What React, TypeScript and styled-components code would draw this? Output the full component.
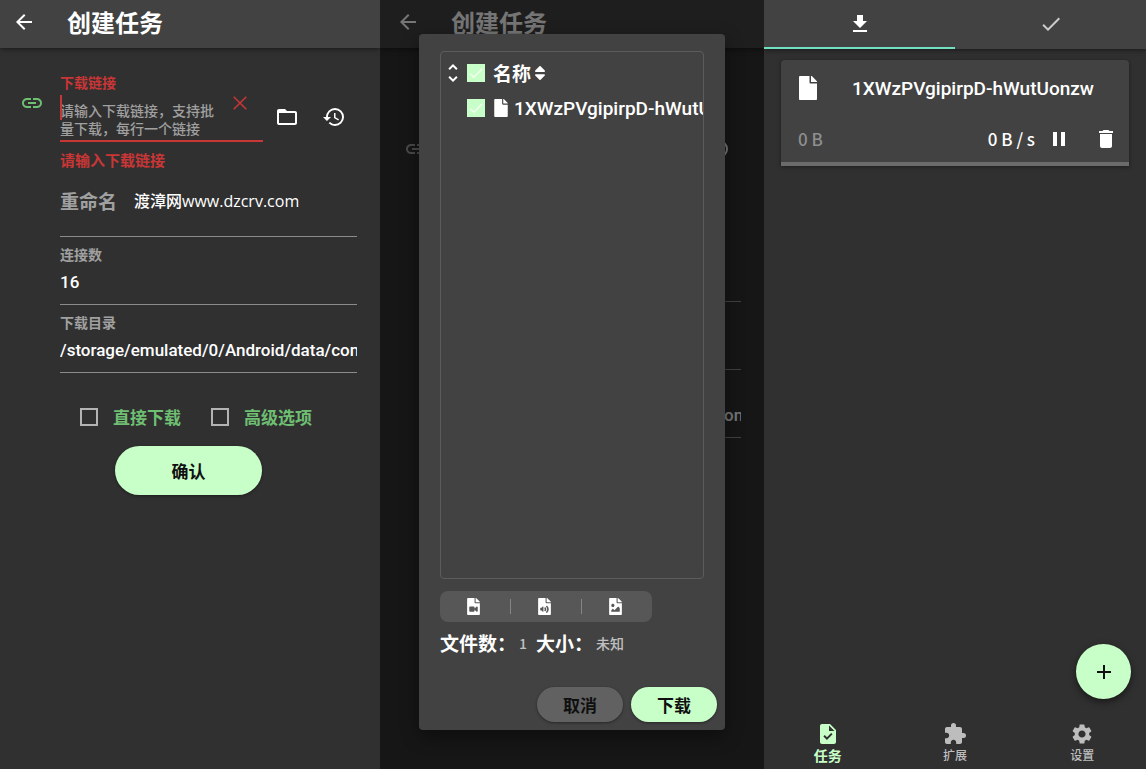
import React from "react";
import styled, { createGlobalStyle, css } from "styled-components";
import {
  MdAdd,
  MdArrowBack,
  MdCheck,
  MdDelete,
  MdExtension,
  MdFileDownload,
  MdHistory,
  MdLink,
  MdPause,
  MdSettings,
  MdTask,
  MdUnfoldMore,
} from "react-icons/md";
import { FaFile, FaFileAudio, FaFileImage, FaFileVideo, FaSort } from "react-icons/fa";

const color = {
  page: "#303030",
  surface: "#424242",
  raised: "#575757",
  line: "#8b8b8b",
  muted: "#a0a0a0",
  text: "#ffffff",
  mint: "#c8ffc8",
  green: "#6fbf73",
  red: "#c93636",
  teal: "#72dfc0",
};

const latin = `Roboto, "Noto Sans CJK SC", sans-serif`;

const GlobalStyle = createGlobalStyle`
  *, *::before, *::after { box-sizing: border-box; }
  body {
    margin: 0;
    background: ${color.page};
    color: ${color.text};
    font-family: "Noto Sans CJK SC", "Noto Sans", sans-serif;
    font-size: 17px;
    font-weight: 500;
  }
  button, input, textarea { font: inherit; color: inherit; }
  button { border: 0; padding: 0; background: none; cursor: pointer; }
  svg { display: block; flex: none; }
`;

const Screens = styled.main`
  display: grid;
  grid-template-columns: 380fr 384fr 382fr;
  min-height: 100vh;
`;

const Panel = styled.section`
  position: relative;
  display: flex;
  flex-direction: column;
  min-width: 0;
  overflow: hidden;
  background: ${color.page};
`;

const AppBar = styled.header<{ $inset?: boolean }>`
  display: flex;
  align-items: center;
  gap: 31px;
  height: 48px;
  padding: 0 ${(p) => (p.$inset ? 16 : 12)}px 5px;
  background: ${color.surface};
  box-shadow: 0 1px 5px rgba(0, 0, 0, 0.5);
`;

const Title = styled.h1`
  margin: 0;
  font-size: 24px;
  line-height: 32px;
  font-weight: 700;
`;

const IconButton = styled.button<{ $width?: number }>`
  display: flex;
  align-items: center;
  justify-content: center;
  width: ${(p) => p.$width ?? 24}px;
  height: 24px;
`;

const Body = styled.form<{ $inset?: boolean }>`
  display: flex;
  flex-direction: column;
  padding: ${(p) => (p.$inset ? "0 23px 0 24px" : "24px 23px 0 20px")};
`;

const LinkRow = styled.div<{ $tall?: boolean }>`
  display: flex;
  align-items: ${(p) => (p.$tall ? "center" : "flex-start")};
  min-height: ${(p) => (p.$tall ? 202 : 0)}px;
`;

const LinkMark = styled.span<{ $active?: boolean }>`
  width: 40px;
  padding-top: ${(p) => (p.$active ? 19 : 0)}px;
  color: ${(p) => (p.$active ? color.green : color.muted)};
`;

const LinkField = styled.div`
  flex: 1;
  min-width: 0;
  display: flex;
  flex-direction: column;
`;

const Label = styled.label<{ $error?: boolean }>`
  font-size: 14px;
  line-height: 20px;
  font-weight: 700;
  color: ${(p) => (p.$error ? color.red : color.muted)};
`;

const LinkBox = styled.div`
  position: relative;
  display: flex;
  align-items: flex-start;
  padding-top: 9px;
  border-bottom: 2px solid ${color.red};
`;

const Caret = styled.span`
  position: absolute;
  left: 0;
  top: 3px;
  width: 2px;
  height: 25px;
  background: ${color.red};
`;

const LinkInput = styled.textarea`
  flex: 1;
  min-width: 0;
  height: 39px;
  padding: 0;
  border: 0;
  outline: 0;
  resize: none;
  overflow: hidden;
  background: none;
  font-size: 14px;
  line-height: 18px;
  &::placeholder { color: ${color.muted}; opacity: 1; }
`;

const ClearButton = styled(IconButton)`
  width: 46px;
  height: 14px;
  margin-top: -5px;
  color: ${color.red};
`;

const Helper = styled.p`
  margin: 8px 0 0;
  font-size: 15px;
  line-height: 20px;
  font-weight: 700;
  color: ${color.red};
`;

const LinkTools = styled.div<{ $drop?: boolean }>`
  display: flex;
  padding-top: ${(p) => (p.$drop ? 33 : 0)}px;
`;

const Fields = styled.div`
  display: flex;
  flex-direction: column;
  padding-left: 40px;
`;

const RenameField = styled.div<{ $short?: boolean }>`
  display: flex;
  align-items: center;
  gap: 17px;
  height: ${(p) => (p.$short ? 52 : 67)}px;
  padding-bottom: 5px;
  border-bottom: 1px solid ${color.line};
`;

const RenameLabel = styled.label`
  flex: none;
  font-size: 19px;
  line-height: 26px;
  font-weight: 700;
  color: ${color.muted};
`;

const bareInput = css`
  width: 100%;
  min-width: 0;
  padding: 0;
  border: 0;
  outline: 0;
  background: none;
`;

const RenameInput = styled.input`
  ${bareInput}
  font-family: "Open Sans", "Noto Sans CJK SC", sans-serif;
  font-size: 16px;
  line-height: 24px;
  font-weight: 500;
`;

const Field = styled.div`
  display: flex;
  flex-direction: column;
  justify-content: flex-end;
  gap: 5px;
  height: 68px;
  padding: 7px 0 9px;
  border-bottom: 1px solid ${color.line};
`;

const FieldInput = styled.input`
  ${bareInput}
  height: 26px;
  font-family: ${latin};
  font-size: 17px;
`;

const Options = styled.div`
  display: flex;
  gap: 30px;
  margin: 32px 0 0 60px;
`;

const Option = styled.label`
  display: flex;
  align-items: center;
  gap: 15px;
  line-height: 24px;
  font-weight: 700;
  color: ${color.green};
`;

const Tick = styled.input`
  appearance: none;
  flex: none;
  width: 18px;
  height: 18px;
  margin: 0;
  border: 2px solid #b3b3b3;
  &:checked { border: 0; background: ${color.mint}; }
`;

const TickWrap = styled.span`
  position: relative;
  display: flex;
  svg {
    position: absolute;
    inset: 0;
    color: #f2fff0;
    pointer-events: none;
  }
`;

const PillButton = styled.button<{ $size: "large" | "small"; $quiet?: boolean }>`
  width: ${(p) => (p.$size === "large" ? 147 : 86)}px;
  height: ${(p) => (p.$size === "large" ? 49 : 35)}px;
  padding-bottom: 1px;
  border-radius: 25px;
  background: ${(p) => (p.$quiet ? "#616161" : color.mint)};
  color: #101010;
  font-size: 17px;
  font-weight: 700;
  box-shadow: 0 1px 3px rgba(0, 0, 0, 0.4);
`;

const ConfirmButton = styled(PillButton)`
  align-self: center;
  margin-top: 17px;
`;

const Scrim = styled.div`
  position: absolute;
  inset: 0;
  display: flex;
  padding: 34px 39px 39px;
  background: rgba(0, 0, 0, 0.54);
`;

const Dialog = styled.div`
  flex: 1;
  min-width: 0;
  display: flex;
  flex-direction: column;
  padding: 17px 8px 8px 21px;
  border-radius: 4px;
  background: ${color.surface};
  box-shadow: 0 6px 18px rgba(0, 0, 0, 0.4);
`;

const FileTree = styled.div`
  flex: 1;
  margin-right: 13px;
  padding-top: 8px;
  overflow: hidden;
  border: 1px solid #5c5c5c;
  border-radius: 4px;
`;

const TreeRow = styled.div<{ $child?: boolean }>`
  display: flex;
  align-items: center;
  gap: ${(p) => (p.$child ? 7 : 8)}px;
  height: ${(p) => (p.$child ? 44 : 26)}px;
  padding-left: ${(p) => (p.$child ? 26 : 0)}px;
  white-space: nowrap;
`;

const TreeHead = styled.button`
  display: flex;
  align-items: center;
  font-size: 19px;
  line-height: 26px;
  font-weight: 700;
`;

const FileName = styled.span`
  padding-top: 2px;
  font-family: ${latin};
  font-size: 19px;
  line-height: 26px;
`;

const FileLabel = styled.span`
  display: flex;
  align-items: center;
  gap: 4px;
`;

const Expander = styled(IconButton)`
  margin-right: -6px;
`;

const FilterBar = styled.div`
  display: flex;
  align-items: center;
  align-self: flex-start;
  height: 31px;
  margin-top: 12px;
  border-radius: 8px;
  background: ${color.raised};
`;

const FilterButton = styled.button`
  display: flex;
  align-items: center;
  justify-content: center;
  width: 70px;
  height: 31px;
  padding-right: 4px;
`;

const Separator = styled.span`
  width: 1px;
  height: 15px;
  background: #858585;
`;

const Summary = styled.p`
  display: flex;
  align-items: center;
  margin: 8px 0 0;
  font-size: 19px;
  line-height: 26px;
  font-weight: 700;
  white-space: nowrap;
`;

const SummaryValue = styled.span`
  min-width: 20px;
  padding: 0 3px;
  font-size: 14px;
  font-weight: 500;
  color: #c0c0c0;
`;

const DialogActions = styled.div`
  display: flex;
  justify-content: flex-end;
  gap: 8px;
  margin-top: 31px;
`;

const Tabs = styled.nav`
  display: flex;
  height: 49px;
  background: ${color.surface};
  box-shadow: 0 1px 5px rgba(0, 0, 0, 0.5);
`;

const Tab = styled.button<{ $active?: boolean }>`
  flex: 1;
  display: flex;
  align-items: center;
  justify-content: center;
  color: ${(p) => (p.$active ? color.text : "#cccccc")};
  border-bottom: 2px solid ${(p) => (p.$active ? color.teal : "transparent")};
`;

const Card = styled.article`
  margin: 11px 17px 0;
  border-radius: 4px 4px 0 0;
  background: ${color.surface};
  box-shadow: 0 1px 4px rgba(0, 0, 0, 0.4);
`;

const CardTop = styled.div`
  display: flex;
  align-items: center;
  gap: 32px;
  padding: 14px 15px 0;
  white-space: nowrap;
`;

const CardName = styled(FileName).attrs({ as: "h2" })`
  margin: 0;
  font-weight: 500;
`;

const CardBottom = styled.div`
  display: flex;
  align-items: center;
  padding: 24px 11px 10px 17px;
`;

const Size = styled.span`
  flex: 1;
  font-size: 17px;
  line-height: 26px;
  color: #8f8f8f;
`;

const Speed = styled.span`
  padding-right: 12px;
  font-size: 17px;
  line-height: 26px;
`;

const CardActions = styled.div`
  display: flex;
  gap: 23px;
`;

const Progress = styled.div`
  height: 4px;
  background: #6b6b6b;
`;

const AddButton = styled.button`
  display: flex;
  align-items: center;
  justify-content: center;
  align-self: flex-end;
  width: 55px;
  height: 55px;
  margin: auto 15px 17px 0;
  border-radius: 50%;
  background: ${color.mint};
  color: #101010;
  box-shadow: 0 3px 7px rgba(0, 0, 0, 0.5);
`;

const BottomNav = styled.nav`
  display: flex;
  height: 53px;
`;

const NavLink = styled.a<{ $active?: boolean }>`
  flex: 1;
  display: flex;
  flex-direction: column;
  align-items: center;
  padding-top: 6px;
  font-size: ${(p) => (p.$active ? 14 : 12)}px;
  line-height: 18px;
  font-weight: ${(p) => (p.$active ? 700 : 500)};
  text-decoration: none;
  color: ${(p) => (p.$active ? color.mint : "#bdbdbd")};
`;

const FolderIcon = () => (
  <svg width="24" height="24" viewBox="0 0 24 24" fill="currentColor">
    <path d="M20 6h-8l-2-2H4c-1.1 0-2 .9-2 2v12c0 1.1.9 2 2 2h16c1.1 0 2-.9 2-2V8c0-1.1-.9-2-2-2zm0 12H4V8h16v10z" />
  </svg>
);

const CrossIcon = () => (
  <svg width="14" height="14" viewBox="0 0 14 14" fill="none" stroke="currentColor" strokeWidth="1.5">
    <path d="M.7.7l12.6 12.6M13.3.7L.7 13.3" />
  </svg>
);

const DIRECTORY = "/storage/emulated/0/Android/data/com";
const FILE_NAME = "1XWzPVgipirpD-hWutUonzw";

function CheckedTick({ label }: { label: string }) {
  return (
    <TickWrap>
      <Tick type="checkbox" defaultChecked aria-label={label} />
      <MdCheck size={18} />
    </TickWrap>
  );
}

function LinkButtons({ drop }: { drop?: boolean }) {
  return (
    <LinkTools $drop={drop}>
      <IconButton type="button" $width={47} aria-label="打开文件">
        <FolderIcon />
      </IconButton>
      <IconButton type="button" $width={47} aria-label="历史记录">
        <MdHistory size={24} />
      </IconButton>
    </LinkTools>
  );
}

function CreateBar({ inset }: { inset?: boolean }) {
  return (
    <AppBar $inset={inset}>
      <IconButton type="button" aria-label="返回">
        <MdArrowBack size={24} />
      </IconButton>
      <Title>创建任务</Title>
    </AppBar>
  );
}

function CreateScreen() {
  return (
    <Panel>
      <CreateBar />
      <Body onSubmit={(e) => e.preventDefault()}>
        <LinkRow>
          <LinkMark $active>
            <MdLink size={24} />
          </LinkMark>
          <LinkField>
            <Label htmlFor="link" $error>下载链接</Label>
            <LinkBox>
              <Caret />
              <LinkInput id="link" placeholder="请输入下载链接，支持批量下载，每行一个链接" />
              <ClearButton type="button" aria-label="清除">
                <CrossIcon />
              </ClearButton>
            </LinkBox>
            <Helper>请输入下载链接</Helper>
          </LinkField>
          <LinkButtons drop />
        </LinkRow>
        <Fields>
          <RenameField>
            <RenameLabel htmlFor="rename">重命名</RenameLabel>
            <RenameInput id="rename" defaultValue="渡漳网www.dzcrv.com" />
          </RenameField>
          <Field>
            <Label htmlFor="connections">连接数</Label>
            <FieldInput id="connections" defaultValue="16" />
          </Field>
          <Field>
            <Label htmlFor="directory">下载目录</Label>
            <FieldInput id="directory" defaultValue={DIRECTORY} />
          </Field>
        </Fields>
        <Options>
          <Option>
            <Tick type="checkbox" />
            直接下载
          </Option>
          <Option>
            <Tick type="checkbox" />
            高级选项
          </Option>
        </Options>
        <ConfirmButton $size="large">确认</ConfirmButton>
      </Body>
    </Panel>
  );
}

function ResolveScreen() {
  return (
    <Panel>
      <CreateBar inset />
      <Body $inset>
        <LinkRow $tall>
          <LinkMark>
            <MdLink size={24} />
          </LinkMark>
          <LinkField />
          <LinkButtons />
        </LinkRow>
        <Fields>
          <RenameField $short />
          <Field />
          <Field>
            <FieldInput aria-label="下载目录" defaultValue={DIRECTORY} />
          </Field>
        </Fields>
      </Body>
      <Scrim>
        <Dialog role="dialog" aria-label="文件列表">
          <FileTree>
            <TreeRow>
              <Expander type="button" aria-label="展开">
                <MdUnfoldMore size={24} />
              </Expander>
              <CheckedTick label="全选" />
              <TreeHead type="button">
                名称
                <FaSort size={18} />
              </TreeHead>
            </TreeRow>
            <TreeRow $child>
              <CheckedTick label={FILE_NAME} />
              <FileLabel>
                <FaFile size={18} />
                <FileName>{FILE_NAME}</FileName>
              </FileLabel>
            </TreeRow>
          </FileTree>
          <FilterBar>
            <FilterButton type="button" aria-label="视频">
              <FaFileVideo size={17} />
            </FilterButton>
            <Separator />
            <FilterButton type="button" aria-label="音频">
              <FaFileAudio size={17} />
            </FilterButton>
            <Separator />
            <FilterButton type="button" aria-label="图片">
              <FaFileImage size={17} />
            </FilterButton>
          </FilterBar>
          <Summary>
            文件数：<SummaryValue>1</SummaryValue>
            大小：<SummaryValue>未知</SummaryValue>
          </Summary>
          <DialogActions>
            <PillButton type="button" $size="small" $quiet>取消</PillButton>
            <PillButton type="button" $size="small">下载</PillButton>
          </DialogActions>
        </Dialog>
      </Scrim>
    </Panel>
  );
}

function TaskScreen() {
  return (
    <Panel>
      <Tabs>
        <Tab type="button" $active aria-label="下载中">
          <MdFileDownload size={24} />
        </Tab>
        <Tab type="button" aria-label="已完成">
          <MdCheck size={24} />
        </Tab>
      </Tabs>
      <Card>
        <CardTop>
          <FaFile size={24} />
          <CardName>{FILE_NAME}</CardName>
        </CardTop>
        <CardBottom>
          <Size>0 B</Size>
          <Speed>0 B / s</Speed>
          <CardActions>
            <IconButton type="button" aria-label="暂停">
              <MdPause size={24} />
            </IconButton>
            <IconButton type="button" aria-label="删除">
              <MdDelete size={24} />
            </IconButton>
          </CardActions>
        </CardBottom>
        <Progress />
      </Card>
      <AddButton type="button" aria-label="新建任务">
        <MdAdd size={24} />
      </AddButton>
      <BottomNav>
        <NavLink href="#tasks" $active>
          <MdTask size={24} />
          任务
        </NavLink>
        <NavLink href="#extensions">
          <MdExtension size={24} />
          扩展
        </NavLink>
        <NavLink href="#settings">
          <MdSettings size={24} />
          设置
        </NavLink>
      </BottomNav>
    </Panel>
  );
}

export default function App() {
  return (
    <>
      <GlobalStyle />
      <Screens>
        <CreateScreen />
        <ResolveScreen />
        <TaskScreen />
      </Screens>
    </>
  );
}
